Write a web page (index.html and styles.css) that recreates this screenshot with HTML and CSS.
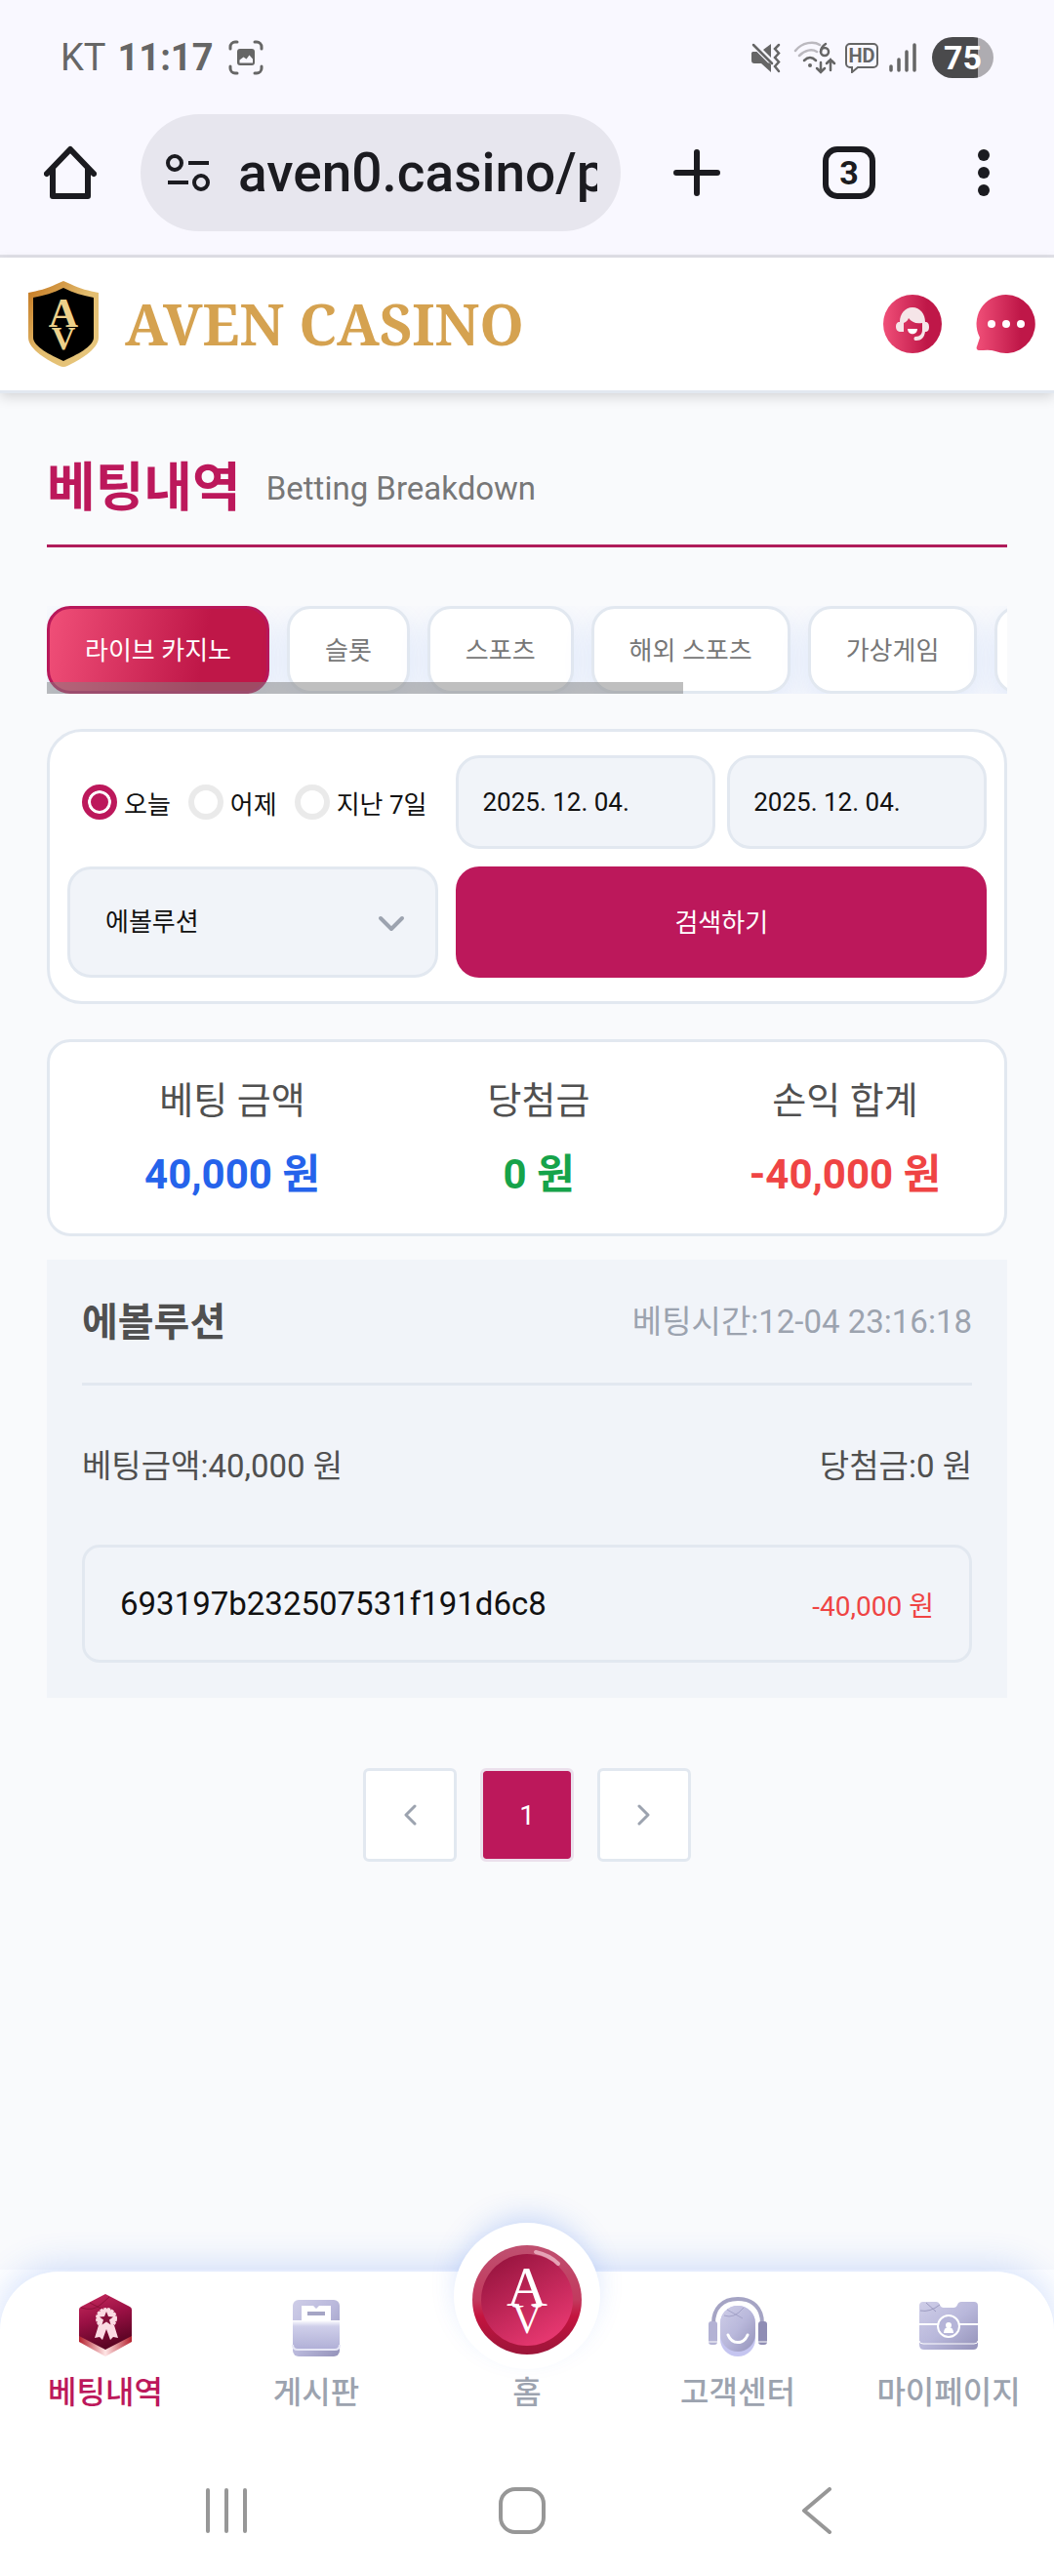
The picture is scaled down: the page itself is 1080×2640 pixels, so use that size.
FILE: index.html
```html
<!DOCTYPE html>
<html lang="ko">
<head>
    <meta charset="UTF-8">
    <meta name="viewport" content="width=device-width, initial-scale=1.0">
    <title>AVEN CASINO - 베팅내역</title>
    <link rel="stylesheet" href="styles.css">
</head>
<body>
    <!-- Device status bar -->
    <div class="status-bar">
        <div class="status-left">
            <span class="carrier">KT</span>
            <span class="clock">11:17</span>
            <svg class="capture" width="36" height="36" viewBox="0 0 36 36" fill="none" stroke="#666" stroke-width="3" stroke-linecap="round">
                <path d="M2 9V7a5 5 0 0 1 5-5h2M27 2h2a5 5 0 0 1 5 5v2M34 27v2a5 5 0 0 1-5 5h-2M9 34H7a5 5 0 0 1-5-5v-2"/>
                <rect x="9" y="9" width="18" height="17" rx="3" fill="#666" stroke="none"/>
                <path d="M11.500 23.500v-3l4-3 3 2 3-4 3.500 4v4z" fill="#f9f8ff" stroke="none"/>
            </svg>
        </div>
        <div class="status-right">
            <svg width="32" height="32" viewBox="0 0 32 32">
                <path d="M2 10h5l14 13v8L11 22H4a3 3 0 0 1-3-3v-6a3 3 0 0 1 1-3zM13 8l8-6v14z" fill="#666"/>
                <path d="M3 3l17 17" stroke="#f9f8ff" stroke-width="5"/>
                <path d="M3 3l19 19" stroke="#666" stroke-width="2.500" stroke-linecap="round"/>
                <path d="M29 3l-4 4 4 4.500-4 4.500 4 4.500-4 4.500 4 5" fill="none" stroke="#666" stroke-width="2.500" stroke-linecap="round"/>
            </svg>
            <svg class="wifi" width="44" height="34" viewBox="0 0 44 34" fill="none" stroke-width="2.500" stroke-linecap="round">
                <path d="M2 10c7-9 19-10 25-6M6 15c6-6 13-7 18-4" stroke="#bbb9bf"/>
                <path d="M11 20c4-4 8-4 12 0" stroke="#666"/>
                <circle cx="17" cy="25" r="2" fill="#666"/>
                <path d="M28 22v9M24 28l4 4 4-4M38 30V19M34 23l4-4 4 4" stroke="#666"/>
                <path d="M33 3c-3 2-5 5-5 8" stroke="#666"/>
                <circle cx="32" cy="11" r="4" stroke="#666"/>
            </svg>
            <svg width="36" height="32" viewBox="0 0 36 32">
                <path d="M6 2h24a4 4 0 0 1 4 4v16a4 4 0 0 1-4 4H14l-6 5v-5H6a4 4 0 0 1-4-4V6a4 4 0 0 1 4-4z" fill="none" stroke="#666" stroke-width="2"/>
                <text x="18" y="21" text-anchor="middle" class="hd-text">HD</text>
            </svg>
            <svg class="signal" width="28" height="32" viewBox="0 0 28 32" stroke="#666" stroke-width="3.500" stroke-linecap="round">
                <path d="M2 29v-4M10 29V18M18 29V10M26 29V3"/>
            </svg>
            <span class="battery">75</span>
        </div>
    </div>

    <!-- Browser toolbar -->
    <div class="toolbar">
        <button class="tool-button" aria-label="홈페이지">
            <svg width="54" height="56" viewBox="0 0 54 56" fill="none" stroke="#1b1b20" stroke-width="6" stroke-linejoin="round" stroke-linecap="round">
                <path d="M3 29L27 4l24 25M9 24v28h36V24"/>
            </svg>
        </button>
        <div class="address">
            <svg width="46" height="40" viewBox="0 0 46 40" fill="none" stroke="#1b1b20" stroke-width="4">
                <circle cx="9" cy="10" r="7"/><path d="M23 10h21M2 30h21"/><circle cx="36" cy="30" r="7"/>
            </svg>
            <input class="address-input" type="text" value="aven0.casino/p" aria-label="주소">
        </div>
        <div class="tools">
            <button class="tool-button" aria-label="새 탭">
                <svg width="48" height="48" viewBox="0 0 48 48" stroke="#1b1b20" stroke-width="6" stroke-linecap="round">
                    <path d="M24 3v42M3 24h42"/>
                </svg>
            </button>
            <button class="tab-count" aria-label="탭 3개">3</button>
            <button class="tool-button" aria-label="메뉴">
                <svg width="12" height="48" viewBox="0 0 12 48" fill="#1b1b20">
                    <circle cx="6" cy="6" r="6"/><circle cx="6" cy="24" r="6"/><circle cx="6" cy="42" r="6"/>
                </svg>
            </button>
        </div>
    </div>

    <header class="site-header">
        <a class="brand" href="#">
            <svg width="74" height="88" viewBox="0 0 74 88">
                <defs>
                    <linearGradient id="gold" x1="0" y1="0" x2="1" y2="1">
                        <stop offset="0" stop-color="#c2731b"/>
                        <stop offset=".5" stop-color="#e3bd6f"/>
                        <stop offset="1" stop-color="#e8c981"/>
                    </linearGradient>
                </defs>
                <path d="M37 0l7 3c10 5 19 7 29 9v46c0 12-21 24-32 29q-4 2-8 0C22 82 1 70 1 58V12c10-2 19-4 29-9z" fill="url(#gold)"/>
                <path d="M37 7c10 5 20 8 31 10v41c0 9-18 18-31 24C24 76 6 67 6 58V17c11-2 21-5 31-10z" fill="#000"/>
                <text x="37" y="47" text-anchor="middle" class="shield-text">A</text>
                <text x="37" y="70" text-anchor="middle" class="shield-text small">V</text>
            </svg>
            <span class="brand-name">AVEN CASINO</span>
        </a>
        <div class="header-actions">
            <button class="round-button" aria-label="상담">
                <svg width="62" height="62" viewBox="0 0 62 62">
                    <defs>
                        <linearGradient id="rose" x1="0" x2="1">
                            <stop offset="0" stop-color="#f04f78"/>
                            <stop offset=".75" stop-color="#bf1748"/>
                            <stop offset="1" stop-color="#bf1748"/>
                        </linearGradient>
                    </defs>
                    <circle cx="31" cy="31" r="30" fill="url(#rose)"/>
                    <path d="M18 29c0-8 5-15 13-15s13 7 13 15c3 0 4 2 4 5s-1 5-4 5c-1 6-4 9-9 9h-1c-2 0-2-4 0-4 5 0 7-3 7-7v-7c-7 1-11-1-14-5-1 3-3 4-5 5v9h-3c-3 0-5-2-5-5s1-5 4-5z" fill="#f5e5e8"/>
                    <path d="M26 36h10c0 7-10 7-10 0z" fill="#fff"/>
                </svg>
            </button>
            <button class="round-button" aria-label="채팅">
                <svg width="62" height="62" viewBox="0 0 62 62">
                    <path d="M31 1a30 30 0 1 1-11 58c-5-2-11-1-17-1-2 0-3-2-2-4l3-9A30 30 0 0 1 31 1z" fill="url(#rose)"/>
                    <circle cx="16" cy="31" r="4" fill="#fff"/><circle cx="31" cy="31" r="4" fill="#fff"/><circle cx="46" cy="31" r="4" fill="#fff"/>
                </svg>
            </button>
        </div>
    </header>

    <main class="content">
        <div class="page-title">
            <h1>베팅내역</h1>
            <span>Betting Breakdown</span>
        </div>

        <div class="tabs">
            <button class="tab active">라이브 카지노</button>
            <button class="tab">슬롯</button>
            <button class="tab">스포츠</button>
            <button class="tab">해외 스포츠</button>
            <button class="tab">가상게임</button>
            <button class="tab" aria-label="더보기"></button>
            <div class="tabs-scrollbar"></div>
        </div>

        <form class="search-box">
            <div class="radios">
                <label><input type="radio" name="period" checked>오늘</label>
                <label><input type="radio" name="period">어제</label>
                <label><input type="radio" name="period">지난 7일</label>
            </div>
            <div class="dates">
                <input class="field" type="text" value="2025. 12. 04." aria-label="시작일">
                <input class="field" type="text" value="2025. 12. 04." aria-label="종료일">
            </div>
            <div class="select-wrap">
                <select class="field" aria-label="게임사">
                    <option>에볼루션</option>
                </select>
                <svg width="28" height="18" viewBox="0 0 28 18" fill="none" stroke="#9ca3af" stroke-width="4" stroke-linecap="round" stroke-linejoin="round">
                    <path d="M3 3l11 11L25 3"/>
                </svg>
            </div>
            <button class="search-button" type="button">검색하기</button>
        </form>

        <section class="summary">
            <div class="summary-item">
                <span>베팅 금액</span>
                <strong class="blue">40,000 원</strong>
            </div>
            <div class="summary-item">
                <span>당첨금</span>
                <strong class="green">0 원</strong>
            </div>
            <div class="summary-item">
                <span>손익 합계</span>
                <strong class="red">-40,000 원</strong>
            </div>
        </section>

        <section class="bet">
            <div class="bet-head">
                <h2>에볼루션</h2>
                <span class="bet-time">베팅시간:12-04 23:16:18</span>
            </div>
            <div class="bet-amounts">
                <span>베팅금액:40,000 원</span>
                <span>당첨금:0 원</span>
            </div>
            <div class="bet-row">
                <span>693197b232507531f191d6c8</span>
                <span class="bet-loss">-40,000 원</span>
            </div>
        </section>

        <div class="pager">
            <button aria-label="이전">
                <svg width="14" height="22" viewBox="0 0 14 22" fill="none" stroke="#9ca3af" stroke-width="3" stroke-linecap="round" stroke-linejoin="round"><path d="M12 2l-9 9 9 9"/></svg>
            </button>
            <button class="current">1</button>
            <button aria-label="다음">
                <svg width="14" height="22" viewBox="0 0 14 22" fill="none" stroke="#9ca3af" stroke-width="3" stroke-linecap="round" stroke-linejoin="round"><path d="M2 2l9 9-9 9"/></svg>
            </button>
        </div>
    </main>

    <!-- Bottom navigation -->
    <div class="nav-wrap">
        <nav class="bottom-nav">
            <a class="nav-item active" href="#">
                <svg width="56" height="66" viewBox="0 0 56 66">
                    <defs>
                        <linearGradient id="hex" x1="0" y1="0" x2=".3" y2="1">
                            <stop offset="0" stop-color="#c92b5e"/>
                            <stop offset=".5" stop-color="#9a1044"/>
                            <stop offset="1" stop-color="#5c0424"/>
                        </linearGradient>
                        <linearGradient id="hexEdge">
                            <stop offset="0" stop-color="#b5202e"/>
                            <stop offset=".5" stop-color="#ffe6e6"/>
                            <stop offset="1" stop-color="#b5202e"/>
                        </linearGradient>
                    </defs>
                    <path d="M1 20v30l27 15 27-15V20z" fill="url(#hexEdge)"/>
                    <path d="M28 1l25 13q2 1 2 3v27L28 58 1 44V17q0-2 2-3z" fill="url(#hex)"/>
                    <path d="M3 15q12 4 20-3l9-8M12 10l12 6" fill="none" stroke="#8e1039" stroke-width="1"/>
                    <path d="M21 33l-4 13 5-1 3 3 4-11 4 11 3-3 5 1-4-13z" fill="#fbdbe3"/>
                    <circle cx="29" cy="26" r="10" fill="#fbdbe3" stroke="#fbdbe3" stroke-width="2" stroke-dasharray="3 1"/>
                    <path d="M29 19l2 5 5 .500-4 3 1.500 5-4.500-3-4.500 3 1.500-5-4-3 5-.500z" fill="#86103b"/>
                </svg>
                <span>베팅내역</span>
            </a>
            <a class="nav-item" href="#">
                <svg width="50" height="66" viewBox="0 0 50 66">
                    <defs>
                        <linearGradient id="lilac" x1="0" y1="0" x2="1" y2="1">
                            <stop offset="0" stop-color="#cfcee8"/>
                            <stop offset=".5" stop-color="#b9b8db"/>
                            <stop offset="1" stop-color="#9492b9"/>
                        </linearGradient>
                        <linearGradient id="folder" x1="0" y1="0" x2="0" y2="1">
                            <stop offset="0" stop-color="#fff"/>
                            <stop offset=".2" stop-color="#cfcfea"/>
                            <stop offset="1" stop-color="#b0afd6"/>
                        </linearGradient>
                    </defs>
                    <rect x="1" y="7" width="48" height="58" rx="6" fill="url(#lilac)"/>
                    <path d="M10 30V13h12l3 3 3-3h12v17z" fill="#fff"/>
                    <path d="M16 21h18" stroke="#a5a5c5" stroke-width="4"/>
                    <path d="M1 28h48v25q0 5-5 5H6q-5 0-5-5z" fill="url(#folder)"/>
                    <path d="M1 53q0 5 5 5h38q5 0 5-5" fill="none" stroke="#e7e7f6" stroke-width="2"/>
                </svg>
                <span>게시판</span>
            </a>
            <a class="nav-item" href="#">
                <span class="home-badge">
                    <svg width="112" height="112" viewBox="0 0 112 112">
                        <defs>
                            <linearGradient id="coinRim" x1="0" y1="0" x2="0" y2="1">
                                <stop offset="0" stop-color="#bf5070"/>
                                <stop offset=".5" stop-color="#c23a5e"/>
                                <stop offset=".65" stop-color="#c4143f"/>
                                <stop offset="1" stop-color="#9b1539"/>
                            </linearGradient>
                            <linearGradient id="coin" x1="0" y1="0" x2=".6" y2="1">
                                <stop offset="0" stop-color="#8e1039"/>
                                <stop offset="1" stop-color="#e5376f"/>
                            </linearGradient>
                        </defs>
                        <circle cx="56" cy="56" r="56" fill="url(#coinRim)"/>
                        <circle cx="56" cy="56" r="47" fill="url(#coin)"/>
                        <path d="M65 7q14 3 23 12" stroke="#e6a3b6" stroke-width="4" fill="none" stroke-linecap="round"/>
                        <text x="56" y="62" text-anchor="middle" class="coin-text">A</text>
                        <text x="56" y="90" text-anchor="middle" class="coin-text small">V</text>
                    </svg>
                </span>
                <span>홈</span>
            </a>
            <a class="nav-item" href="#">
                <svg width="62" height="66" viewBox="0 0 62 66">
                    <path d="M6 31C6 16 15 6 31 6s25 10 25 25" fill="none" stroke="#a5a4c4" stroke-width="4"/>
                    <rect x="13" y="13" width="36" height="52" rx="18" fill="#c5c5f0"/>
                    <rect x="13" y="13" width="36" height="47" rx="18" fill="url(#lilac)"/>
                    <path d="M17 23q10 4 20-8M20 17l16 9" fill="none" stroke="#a3a2c8" stroke-width="1"/>
                    <path d="M21 43c4 10 16 10 20 0" fill="none" stroke="#fff" stroke-width="3" stroke-linecap="round"/>
                    <rect x="1" y="29" width="9" height="24" rx="3" fill="#b3b2d4"/>
                    <rect x="52" y="29" width="9" height="24" rx="3" fill="#8f8db4"/>
                    <path d="M1 50h9M52 50h9" stroke="#fff" stroke-width="1"/>
                </svg>
                <span>고객센터</span>
            </a>
            <a class="nav-item" href="#">
                <svg width="62" height="66" viewBox="0 0 62 66">
                    <path d="M1 13q0-4 4-4h13q3 0 4 3 1 3 4 3h10q3 0 4-3 1-3 4-3h13q4 0 4 4v40q0 5-5 5H6q-5 0-5-5z" fill="url(#lilac)"/>
                    <path d="M2 18q10 2 20-6M8 10l10 9" fill="none" stroke="#9c9bc0" stroke-width="1"/>
                    <path d="M1 49q0 3 4 3h52q4 0 4-3" fill="none" stroke="#fff" stroke-width="1"/>
                    <path d="M0 32h62" stroke="#fff" stroke-width="2"/>
                    <circle cx="31" cy="34" r="11" fill="#b5b4d8" stroke="#fff" stroke-width="2"/>
                    <circle cx="31" cy="33" r="3" fill="#fff"/>
                    <path d="M26 41q0-6 5-6t5 6z" fill="#fff"/>
                </svg>
                <span>마이페이지</span>
            </a>
        </nav>
    </div>

    <div class="system-nav">
        <button aria-label="최근 앱">
            <svg width="48" height="48" viewBox="0 0 48 48" stroke="#979797" stroke-width="4" stroke-linecap="round"><path d="M5 3v42M24 3v42M43 3v42"/></svg>
        </button>
        <button aria-label="홈">
            <svg width="48" height="48" viewBox="0 0 48 48" fill="none" stroke="#979797" stroke-width="4"><rect x="2" y="2" width="44" height="44" rx="15"/></svg>
        </button>
        <button aria-label="뒤로">
            <svg width="48" height="48" viewBox="0 0 48 48" fill="none" stroke="#979797" stroke-width="4" stroke-linecap="round" stroke-linejoin="round"><path d="M37 2L11 24l26 22"/></svg>
        </button>
    </div>
</body>
</html>
```
FILE: styles.css
```css
* {
    box-sizing: border-box;
}

body {
    margin: 0;
    min-height: 100vh;
    display: flex;
    flex-direction: column;
    background: #f9fafc;
    color: #111;
    font-family: Roboto, "Noto Sans CJK KR", sans-serif;
    font-size: 26px;
}

button,
input,
select {
    font: inherit;
    color: inherit;
    margin: 0;
}

button {
    border: none;
    background: none;
    padding: 0;
    cursor: pointer;
}

a {
    color: inherit;
    text-decoration: none;
}

svg {
    display: block;
    flex-shrink: 0;
}

/* Status bar */
.status-bar {
    display: flex;
    justify-content: space-between;
    align-items: center;
    height: 118px;
    padding: 0 62px;
    background: #f9f8ff;
    color: #666;
}

.status-left,
.status-right {
    display: flex;
    align-items: center;
}

.status-left {
    gap: 12px;
    font-size: 38px;
}

.clock {
    font-weight: 700;
}

.capture {
    margin-left: 4px;
}

.status-right {
    gap: 8px;
}

.wifi {
    margin-left: 4px;
}

.signal {
    margin: 0 8px 0 2px;
}

.hd-text {
    font: 700 20px Roboto, sans-serif;
    fill: #666;
}

.battery {
    width: 63px;
    height: 42px;
    border-radius: 21px;
    background: linear-gradient(90deg, #4a4a4c 75%, #aeacb1 75%);
    color: #fff;
    font-size: 34px;
    font-weight: 700;
    line-height: 42px;
    text-align: center;
}

/* Browser toolbar */
.toolbar {
    display: flex;
    align-items: center;
    height: 146px;
    padding: 0 66px 26px 45px;
    border-bottom: 3px solid #e2e2e9;
    background: #f9f8ff;
}

.address {
    display: flex;
    flex: 1;
    align-items: center;
    gap: 28px;
    min-width: 0;
    height: 120px;
    margin: 0 54px 0 45px;
    padding: 0 24px 0 26px;
    border-radius: 60px;
    background: #e7e6ee;
}

.address-input {
    flex: 1;
    min-width: 0;
    padding: 0;
    border: none;
    outline: none;
    background: none;
    color: #1b1b20;
    font-size: 55px;
    font-weight: 500;
}

.tools {
    display: flex;
    align-items: center;
    gap: 105px;
}

.tab-count {
    width: 54px;
    height: 54px;
    border: 6px solid #1b1b20;
    border-radius: 15px;
    font-size: 34px;
    font-weight: 700;
    line-height: 42px;
    color: #1b1b20;
}

/* Site header */
.site-header {
    display: flex;
    align-items: center;
    justify-content: space-between;
    height: 139px;
    padding: 0 18px 0 28px;
    border-bottom: 3px solid #e2e8f0;
    background: #fff;
    box-shadow: 0 4px 12px rgba(0, 0, 0, 0.15);
}

.brand {
    display: flex;
    align-items: center;
    gap: 26px;
}

.brand-name {
    font-family: "Noto Serif", "Liberation Serif", serif;
    font-size: 58px;
    font-weight: 700;
    line-height: 80px;
    color: #d5a250;
}

.shield-text {
    font: 700 42px "Liberation Serif", serif;
    fill: #edd08a;
}

.shield-text.small {
    font-size: 34px;
}

.header-actions {
    display: flex;
    gap: 34px;
}

/* Content */
.content {
    flex: 1;
    padding: 57px 48px 0;
}

.page-title {
    display: flex;
    align-items: center;
    gap: 26px;
    height: 101px;
    padding-bottom: 16px;
    border-bottom: 3px solid #b01c5a;
}

.page-title h1 {
    margin: 0;
    font-size: 54px;
    font-weight: 700;
    line-height: 72px;
    color: #bc185b;
}

.page-title span {
    font-size: 33px;
    line-height: 72px;
    color: #777;
}

.tabs {
    position: relative;
    display: flex;
    gap: 18px;
    margin-top: 60px;
    overflow: hidden;
}

.tab {
    flex-shrink: 0;
    height: 90px;
    padding: 0 36px 4px;
    border: 3px solid #e2e8f0;
    border-radius: 24px;
    background: #fff;
    box-shadow: 0 12px 30px rgba(37, 99, 235, 0.12);
    color: #777;
}

.tab.active {
    border-color: #b8185a;
    background: linear-gradient(100deg, #f04f78, #bf1748 70%);
    color: #fff;
}

.tabs-scrollbar {
    position: absolute;
    left: 0;
    bottom: 0;
    width: 66.3%;
    height: 12px;
    background: rgba(128, 128, 128, 0.5);
}

.search-box {
    display: grid;
    grid-template-columns: 7fr 10fr;
    grid-template-rows: 96px 114px;
    gap: 18px;
    margin-top: 36px;
    padding: 24px 18px;
    border: 3px solid #e2e8f0;
    border-radius: 36px;
    background: #fff;
}

.radios {
    display: flex;
    align-items: center;
    gap: 18px;
    padding-left: 15px;
    white-space: nowrap;
}

.radios label {
    display: flex;
    align-items: center;
    gap: 7px;
}

.radios input {
    appearance: none;
    width: 36px;
    height: 36px;
    border: 6px solid #eaeaea;
    border-radius: 50%;
}

.radios input:checked {
    border-color: #bc185b;
    background: #bc185b;
    box-shadow: inset 0 0 0 3px #fff;
}

.dates {
    display: flex;
    gap: 12px;
}

.field {
    width: 100%;
    min-width: 0;
    height: 100%;
    padding: 0 24px;
    border: 3px solid #e2e8f0;
    border-radius: 24px;
    outline: none;
    background: #f1f4f9;
}

.select-wrap {
    position: relative;
}

.select-wrap select {
    appearance: none;
    padding: 0 36px;
}

.select-wrap svg {
    position: absolute;
    right: 34px;
    top: 50px;
    pointer-events: none;
}

.search-button {
    padding-bottom: 4px;
    border-radius: 24px;
    background: #bc185b;
    color: #fff;
}

.summary {
    display: grid;
    grid-template-columns: repeat(3, 1fr);
    margin-top: 36px;
    padding: 24px 6px 24px 30px;
    border: 3px solid #e2e8f0;
    border-radius: 24px;
    background: #fff;
}

.summary-item {
    display: flex;
    flex-direction: column;
    align-items: center;
    gap: 4px;
    color: #505050;
    font-size: 38px;
    line-height: 72px;
}

.summary-item strong {
    font-size: 42px;
}

.blue {
    color: #2563eb;
}

.green {
    color: #16a34a;
}

.red {
    color: #ef4444;
}

.bet {
    margin-top: 24px;
    padding: 0 36px 36px;
    background: #f1f4f9;
    color: #505050;
    font-size: 33px;
}

.bet-head,
.bet-amounts,
.bet-row {
    display: flex;
    align-items: center;
    justify-content: space-between;
    padding-bottom: 4px;
}

.bet-head {
    height: 129px;
    border-bottom: 3px solid #e2e8f0;
}

.bet-head h2 {
    margin: 0;
    font-size: 40px;
    font-weight: 700;
}

.bet-time {
    color: #9ca3af;
}

.bet-amounts {
    height: 163px;
}

.bet-row {
    height: 121px;
    padding: 0 36px;
    border: 3px solid #e2e8f0;
    border-radius: 18px;
    color: #111;
}

.bet-loss {
    color: #ef4444;
    font-size: 28px;
}

.pager {
    display: flex;
    justify-content: center;
    gap: 24px;
    margin: 72px 0;
}

.pager button {
    display: flex;
    align-items: center;
    justify-content: center;
    width: 96px;
    height: 96px;
    border: 3px solid #e2e8f0;
    border-radius: 6px;
    background: #fff;
    font-size: 28px;
}

.pager .current {
    border-color: #ebe0ec;
    background: #bc185b;
    background-clip: padding-box;
    color: #fff;
}

/* Bottom navigation */
.nav-wrap {
    padding-top: 2px;
    background: #fff;
}

.bottom-nav {
    display: flex;
    height: 177px;
    border-radius: 60px 60px 0 0;
    background: #fff;
    box-shadow: 0 -6px 36px rgba(37, 99, 235, 0.2);
}

.nav-item {
    position: relative;
    display: flex;
    flex: 1;
    flex-direction: column;
    align-items: center;
    justify-content: flex-end;
    gap: 12px;
    padding-bottom: 29px;
    color: #9ca3af;
    font-size: 32px;
    font-weight: 500;
    line-height: 48px;
}

.nav-item.active {
    color: #bc185b;
}

/* Raised over the top edge of the bar */
.home-badge {
    position: absolute;
    left: 50%;
    top: -50px;
    display: flex;
    align-items: center;
    justify-content: center;
    width: 150px;
    height: 150px;
    margin-left: -75px;
    padding-top: 8px;
    border-radius: 50%;
    background: #fff;
    box-shadow: 0 -12px 30px -8px rgba(37, 99, 235, 0.25);
}

.coin-text {
    font: 400 58px "Liberation Serif", serif;
    fill: #fff;
}

.coin-text.small {
    font-size: 42px;
}

.system-nav {
    position: relative;
    display: flex;
    justify-content: space-between;
    align-items: center;
    height: 135px;
    padding: 0 219px 0 208px;
    background: #fff;
}
```
